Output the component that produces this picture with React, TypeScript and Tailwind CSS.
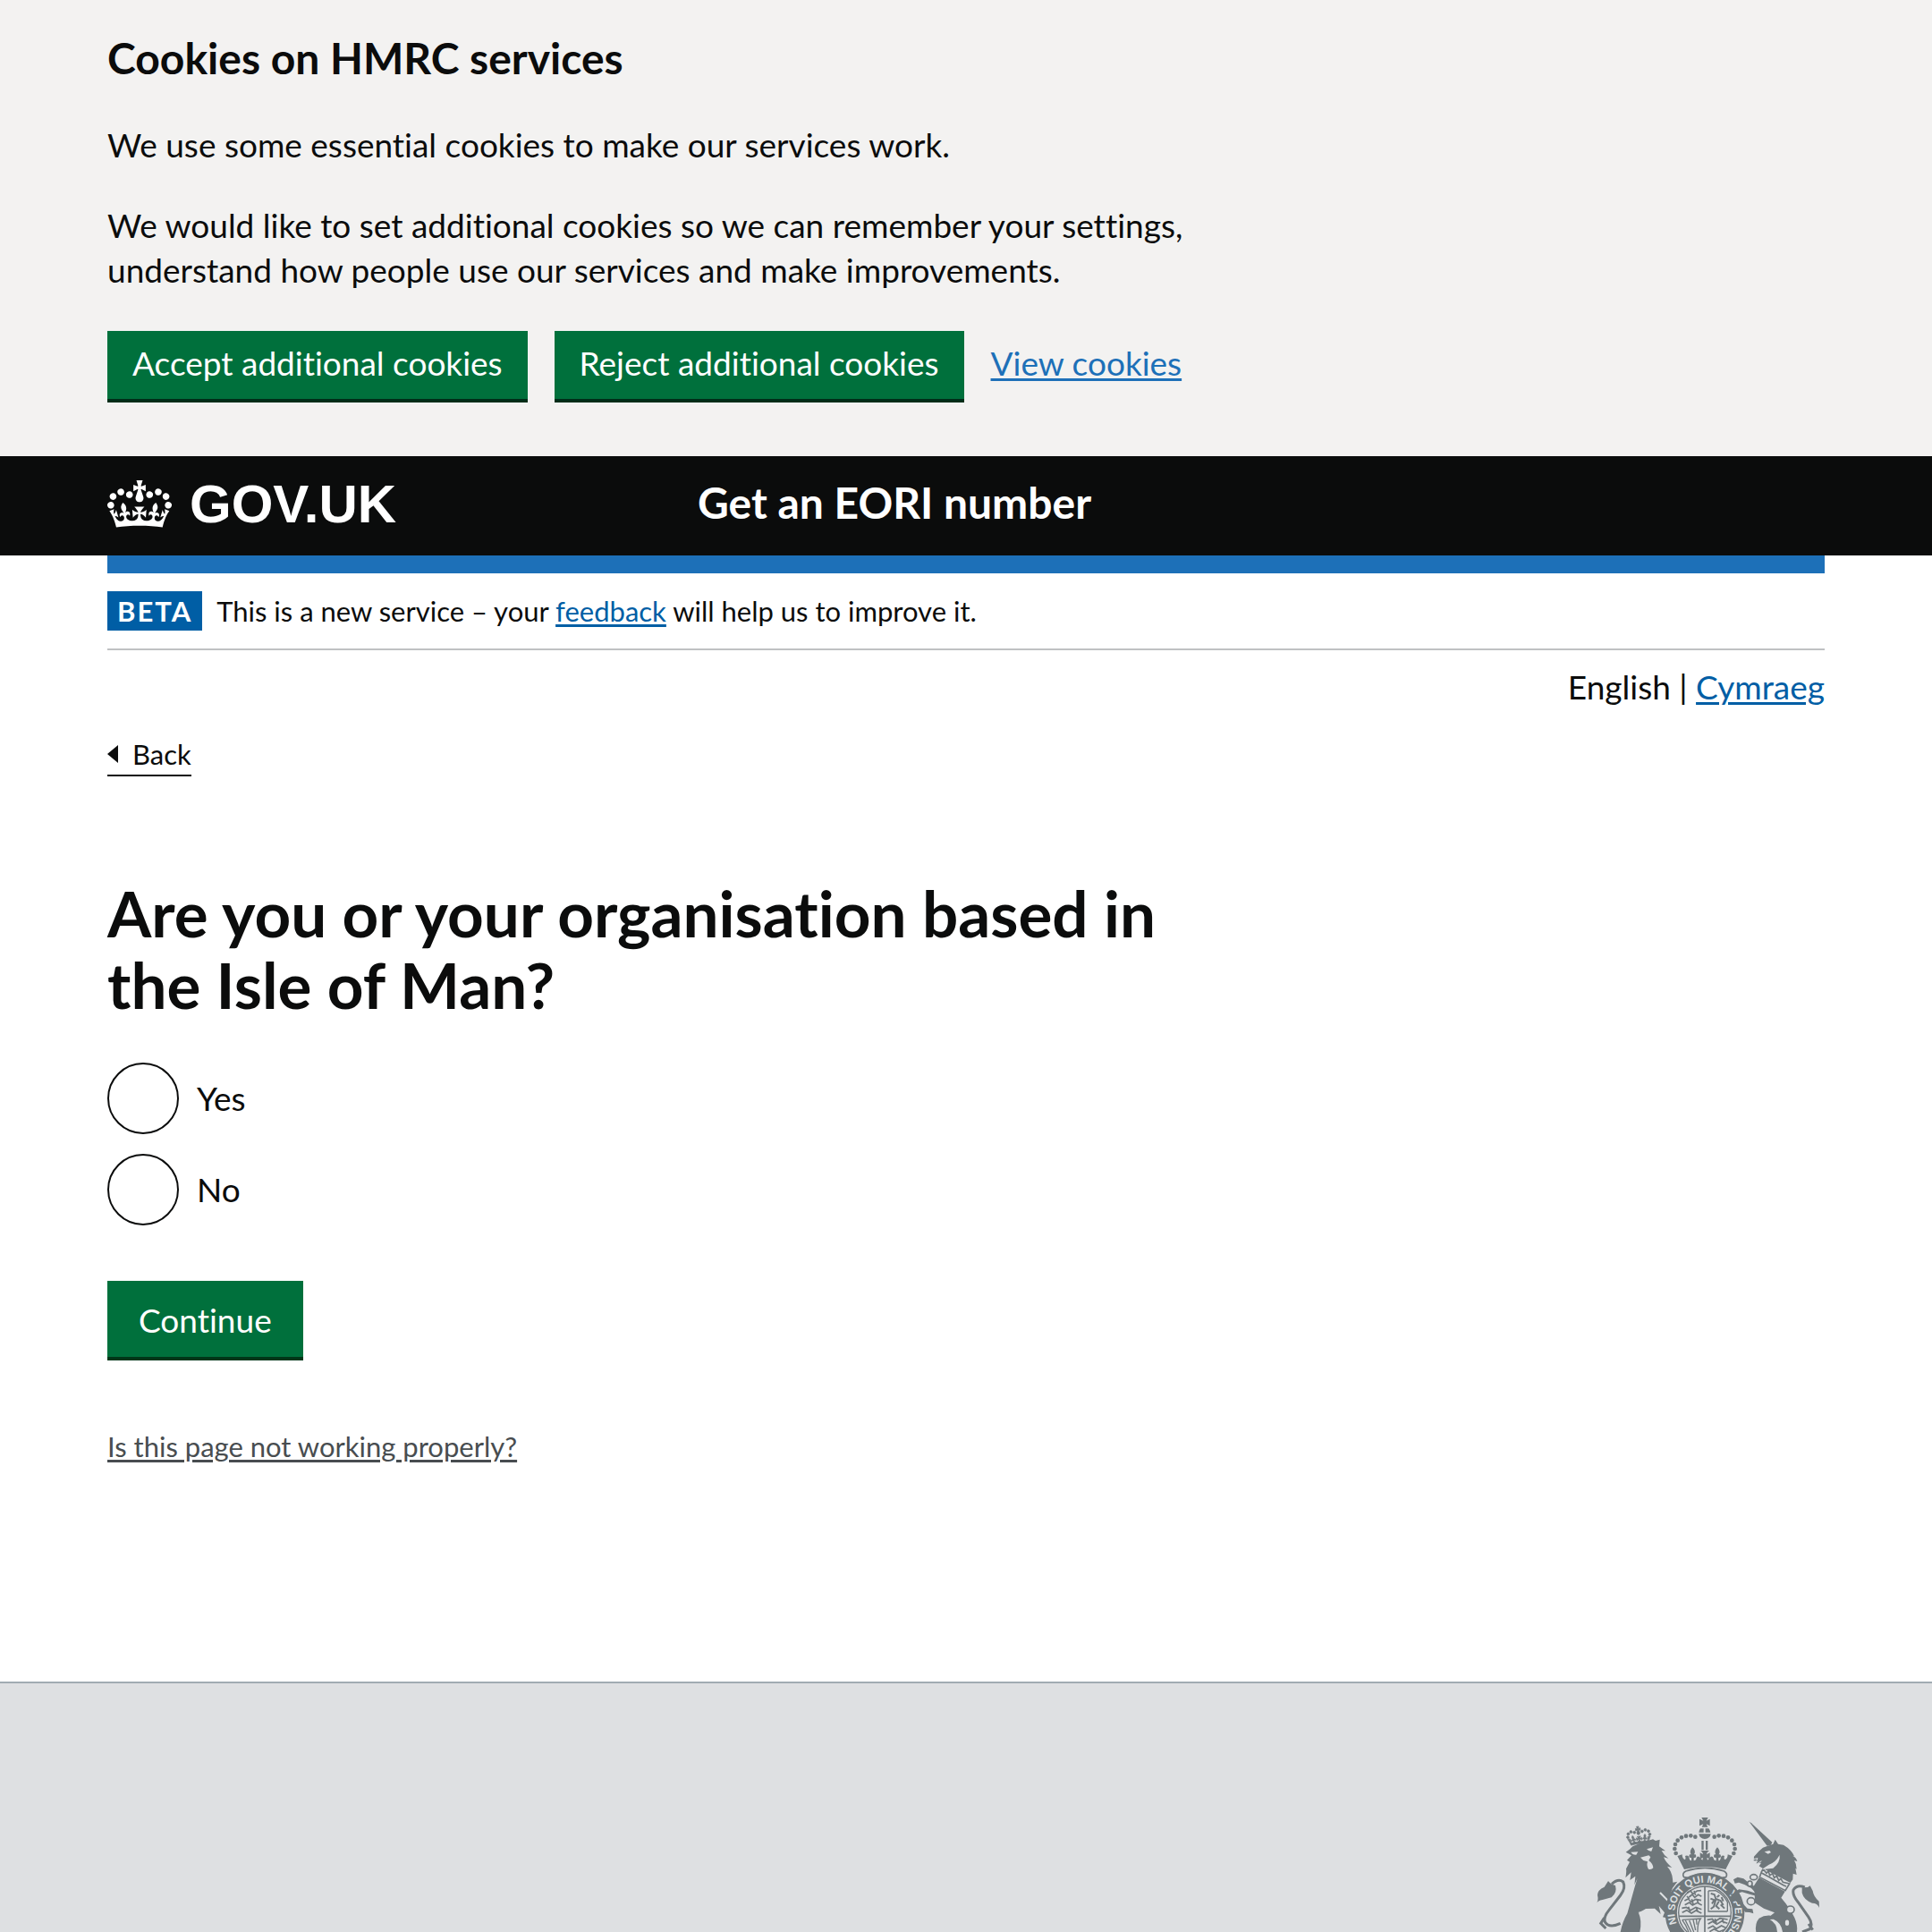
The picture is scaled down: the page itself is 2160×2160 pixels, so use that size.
import type { ReactNode } from "react";

const CROWN_PATH =
  "M25 30.2c3.5 1.5 7.7-.2 9.1-3.7 1.5-3.6-.2-7.8-3.9-9.2-3.6-1.4-7.6.3-9.1 3.9-1.4 3.5.3 7.5 3.9 9zM9 39.5c3.6 1.5 7.8-.2 9.2-3.7 1.5-3.6-.2-7.8-3.9-9.1-3.6-1.5-7.6.2-9.1 3.8-1.4 3.5.3 7.5 3.8 9zM4.4 57.2c3.5 1.5 7.7-.2 9.1-3.8 1.5-3.6-.2-7.7-3.9-9.1-3.5-1.5-7.6.3-9.1 3.8-1.4 3.5.3 7.6 3.9 9.1zm38.3-21.4c3.5 1.5 7.7-.2 9.1-3.8 1.5-3.6-.2-7.7-3.9-9.1-3.6-1.5-7.6.3-9.1 3.8-1.3 3.6.4 7.7 3.9 9.1zm64.4-5.6c-3.6 1.5-7.8-.2-9.1-3.7-1.5-3.6.2-7.8 3.8-9.2 3.6-1.4 7.7.3 9.2 3.9 1.3 3.5-.4 7.5-3.9 9zm15.9 9.3c-3.6 1.5-7.7-.2-9.1-3.7-1.5-3.6.2-7.8 3.7-9.1 3.6-1.5 7.7.2 9.2 3.8 1.5 3.5-.3 7.5-3.8 9zm4.7 17.7c-3.6 1.5-7.8-.2-9.2-3.8-1.5-3.6.2-7.7 3.9-9.1 3.6-1.5 7.7.3 9.2 3.8 1.3 3.5-.4 7.6-3.9 9.1zM89.3 35.8c-3.6 1.5-7.8-.2-9.2-3.8-1.4-3.6.2-7.7 3.9-9.1 3.6-1.5 7.7.3 9.2 3.8 1.4 3.6-.3 7.7-3.9 9.1zM69.7 17.7l8.9 4.7V9.3l-8.9 2.8c-.2-.3-.5-.6-.9-.9L72.4 0H59.6l3.5 11.2c-.3.3-.6.5-.9.9l-8.8-2.8v13.1l8.8-4.7c.3.3.6.7.9.9l-5 15.4v.1c-.2.8-.4 1.6-.4 2.4 0 4.1 3.1 7.5 7 8.1h.2c.3 0 .7.1 1 .1.4 0 .7 0 1-.1h.2c4-.6 7.1-4.1 7.1-8.1 0-.8-.1-1.7-.4-2.4V34l-5.1-15.4c.4-.2.7-.6 1-.9zM66 92.8c16.9 0 32.8 1.1 47.1 3.2 4-16.9 8.9-26.7 14-33.5l-9.6-3.4c1 4.9 1.1 7.2 0 10.2-1.5-1.4-3-4.3-4.2-8.7L108.6 76c2.8-2 5-3.2 7.5-3.3-4.4 9.4-10 11.9-13.6 11.2-4.3-.8-6.3-4.6-5.6-7.9 1-4.7 5.7-5.9 8-.5 4.3-8.7-3-11.4-7.6-8.8 7.1-7.2 7.9-13.5 2.1-21.1-8 6.1-8.1 12.3-4.5 20.8-4.7-5.4-12.1-2.5-9.5 6.2 3.4-5.2 7.9-2 7.2 3.1-.6 4.3-6.4 7.8-13.5 7.2-10.3-.9-10.9-8-11.2-13.8 2.5-.5 7.1 1.8 11 7.3L80.2 60c-4.1 4.4-8 5.3-12.3 5.4 1.4-4.4 8-11.6 8-11.6H55.5s6.4 7.2 7.9 11.6c-4.2-.1-8-1-12.3-5.4l1.4 16.4c3.9-5.5 8.5-7.7 10.9-7.3-.3 5.8-.9 12.8-11.1 13.8-7.2.6-12.9-2.9-13.5-7.2-.7-5 3.8-8.3 7.1-3.1 2.7-8.7-4.6-11.6-9.4-6.2 3.7-8.5 3.6-14.7-4.6-20.8-5.8 7.6-5 13.9 2.2 21.1-4.7-2.6-11.9.1-7.7 8.8 2.3-5.5 7.1-4.2 8.1.5.7 3.3-1.3 7.1-5.7 7.9-3.5.7-9-1.8-13.5-11.2 2.5.1 4.7 1.3 7.5 3.3l-4.7-15.4c-1.2 4.4-2.7 7.2-4.3 8.7-1.1-3-.9-5.3 0-10.2l-9.5 3.4c5 6.9 9.9 16.7 14 33.5 14.8-2.1 30.8-3.2 47.7-3.2z";

const LEFT_BEADS: [number, number][] = [
  [406, 131], [391, 127], [375, 128], [360, 133], [347, 143], [339, 156], [337, 171], [341, 186],
];

function Container({ children }: { children: ReactNode }) {
  return (
    <div className="px-8">
      <div className="mx-auto w-full max-w-[1920px]">{children}</div>
    </div>
  );
}

/* Upper part of the Royal coat of arms. */
function Crest() {
  return (
    <svg className="h-32 w-[250px]" viewBox="72 66 750 384" fill="#6f777b" aria-hidden="true">
      {/* lion's crown */}
      <g transform="translate(171 102) rotate(-8) scale(.63 .62)" stroke="#6f777b" strokeWidth="3">
        <path d={CROWN_PATH} />
      </g>
      {/* lion */}
      <path d="M196 163Q228 148 264 139L273 144L287 140L285 163L306 178L293 177Q300 192 316 203L300 199Q306 216 328 234L312 230Q328 248 330 272L331 284L346 281L330 302L318 335L336 356L344 385L345 405L330 424L325 408L318 416L309 403L297 400L303 385L284 362L290 390L270 371L240 372L216 386Q228 412 220 450H155Q162 415 178 388L205 292L212 270L202 292L205 263L187 276L191 250L172 268Q176 248 174 238L186 215L177 209L192 193L173 182L187 172Z" />
      <path d="M214 384Q248 398 248 450H282Q288 414 262 388Q245 372 214 384Z" fill="#dee0e2" />
      <path d="M190 182L214 181L208 191Q196 192 190 182ZM243 172L264 166L259 179Q250 180 243 172ZM222 200L250 193L256 199L250 210Q265 222 265 235Q258 243 249 239Q242 228 246 214L232 210Z" fill="#dee0e2" />
      <path d="M288 318L330 361" stroke="#dee0e2" strokeWidth="6" />
      {/* lion's tail */}
      <path d="M72 357Q83 345 78 326Q78 309 101 299Q109 287 114 279Q123 291 138 294Q145 318 125 334L95 342Q80 343 72 357Z" />
      <path d="M126 289Q148 269 164 282Q174 302 155 327L117 376Q98 399 103 416Q117 439 155 421M101 402L89 421L106 438" fill="none" stroke="#6f777b" strokeWidth="9" />

      {/* main crown */}
      <path d="M427 66H449L443 77L455 71V94L443 88L448 98H428L433 88L420 94V71L433 77Z" />
      <path d="M423 103H434V116H418Q419 108 423 103ZM440 103H451Q456 109 457 116H440ZM418 121H458Q456 137 438 138Q420 137 418 121ZM427 144H434V175H427ZM441 144H448V175H441Z" />
      {LEFT_BEADS.map(([x, y]) => (
        <g key={`${x}-${y}`}>
          <circle cx={x} cy={y} r="7" />
          <circle cx={876 - x} cy={y} r="7" />
        </g>
      ))}
      <path d="M346 195L362 190Q362 202 370 207Q376 207 372 195Q384 190 386 204Q388 212 393 211L393 201Q381 202 387 190L392 190Q384 179 397 166Q410 179 402 190L407 190Q413 202 401 201L401 211Q409 211 410 202Q414 190 424 203L430 209L432 201L422 205V184L432 190Q432 182 424 177H453Q444 182 444 190L455 184V205L445 201L447 209L453 203Q462 190 467 202Q468 211 476 211L476 201Q464 202 470 190L475 190Q467 179 480 166Q493 179 485 190L490 190Q496 202 484 201L484 211Q489 212 491 204Q493 190 504 195Q500 207 507 207Q515 202 515 190L531 195L508 240Q438 222 369 240Z" />
      <path d="M374 246Q438 224 503 246Q516 254 509 266L492 269Q438 238 384 269L368 266Q360 254 374 246Z" fill="#dee0e2" stroke="#6f777b" strokeWidth="5" />

      {/* garter */}
      <circle cx="438" cy="385" r="112" fill="none" stroke="#6f777b" strokeWidth="42" />
      <path id="garter-motto" d="M438 486A101 101 0 0 1 438 284A101 101 0 0 1 438 486" fill="none" />
      <text className="font-[Liberation_Sans] text-[34px] font-bold" fill="#dee0e2" textAnchor="middle">
        <textPath href="#garter-motto" startOffset="53%">NI SOIT QUI MAL Y PENSE</textPath>
      </text>
      <circle cx="438" cy="385" r="92" fill="#dee0e2" stroke="#dee0e2" strokeWidth="3" />
      <circle cx="438" cy="385" r="88" fill="none" stroke="#6f777b" strokeWidth="4" />
      <path d="M351 397H526M438 297V450" stroke="#6f777b" strokeWidth="5" />
      {/* quarterings */}
      <g fill="none" stroke="#6f777b" strokeWidth="5">
        <path d="M378 318L390 312L398 322L412 312L426 311M385 333L396 324L404 334L416 325L427 331M378 330L386 339M402 312L407 326M370 345L382 339L392 349L408 340L426 344M371 359L386 351L397 360L413 352L428 360M394 340L399 356M411 340L417 354M361 370L376 367L390 377L408 367L427 374M362 385L377 377L393 387L408 378L427 387M383 365L389 382M409 367L415 383" />
        <path d="M450 312V381H514M450 312L474 311Q501 324 514 350V381" strokeWidth="4" />
        <path d="M458 321L470 324L475 339L491 345L500 360M457 338L470 343L462 355M475 341L468 365L458 373M485 347L476 363L487 373M491 358L504 371M487 326L479 333M494 333L500 347" strokeWidth="6" />
        <path d="M362 409L424 405Q413 419 414 450M362 409L374 428L384 450M373 411L392 450M386 411L401 450M399 409L407 444M410 408L411 425" strokeWidth="4" />
        <path d="M446 409L463 406L471 415L489 404L515 408M449 423L464 415L478 424L494 414L514 421M472 405L477 421M496 404L502 421M448 438L465 430L477 439L494 429L511 437M454 449L469 440L486 449L506 441" />
      </g>

      {/* unicorn */}
      <path d="M587 80L594 85L664 149L660 158L647 161Z" />
      <path d="M647 162L667 155L674 140L684 155L702 158Q729 174 738 196L732 194Q746 201 748 213L738 210Q746 222 746 239L742 236L746 258L734 254L733 274L725 285L634 238L620 229L627 218L610 220L616 212L602 211L603 197L619 179L633 167Z" />
      <path d="M689 191Q692 217 667 236L628 241L653 224Q676 216 689 191ZM638 181L655 177L660 183L650 188Z" fill="#dee0e2" />
      <path d="M600 206L615 203L611 211M616 219L628 212" fill="none" stroke="#dee0e2" strokeWidth="3" />
      {/* collar */}
      <path d="M633 237L722 288L712 312L622 262Z" fill="#dee0e2" />
      <path d="M635 241L645 253L651 246L656 260L665 254L671 268L679 262L686 277L693 271L700 283L722 288L708 311L622 266L627 251L651 264L702 293L711 297M633 239L627 251" fill="none" stroke="#6f777b" strokeWidth="5" />
      {/* unicorn's body and forelegs */}
      <path d="M620 268L707 314L694 335Q724 370 739 402Q750 426 747 450H610Q605 421 620 404Q637 393 659 395L672 385L636 371L606 352L605 318L602 296Z" />
      <path d="M608 319L594 303L571 291L552 284L539 287L534 274L548 266L568 271L588 287L610 300ZM610 329L588 323L563 316L548 320L559 348L581 371L598 373L601 388L588 384L573 383L561 363L541 346L524 325L539 318L552 307L582 311L611 321Z" />
      <path d="M668 407Q695 418 699 450H681Q680 421 656 408Z" fill="#dee0e2" />
      <g fill="#dee0e2" stroke="#6f777b" strokeWidth="5">
        <ellipse cx="602" cy="266" rx="12" ry="9" />
        <ellipse cx="589" cy="288" rx="8" ry="9" />
        <ellipse cx="593" cy="347" rx="13" ry="12" />
        <ellipse cx="725" cy="375" rx="13" ry="12" />
        <ellipse cx="714" cy="419" rx="9" ry="12" />
      </g>
      {/* unicorn's tail */}
      <path d="M764 301L783 300L791 295L800 312Q803 332 821 347L822 369Q816 353 798 353Q770 343 764 319Z" />
      <path d="M773 300Q747 289 735 309Q731 326 751 350L786 400Q802 424 790 440L765 450M786 423L800 443" fill="none" stroke="#6f777b" strokeWidth="9" />
    </svg>
  );
}

const LINK = "underline decoration-[3px] underline-offset-[3px]";
const COOKIE_BUTTON =
  "cursor-pointer bg-[#00703c] px-7 pt-[11px] pb-[15px] text-white border-b-4 border-[#002d18]";
const RADIO =
  "size-20 shrink-0 cursor-pointer appearance-none rounded-full border-2 border-[#0b0c0c] bg-white checked:shadow-[inset_0_0_0_18px_white] checked:bg-[#0b0c0c]";

export default function App() {
  return (
    <div className="min-h-screen overflow-x-hidden bg-white font-[Lato,sans-serif] text-[37px] leading-[50px] text-[#0b0c0c] [font-variant-ligatures:none]">
      <section className="bg-[#f3f2f1] pt-[35px] pb-[60px]" aria-label="Cookies on HMRC services">
        <Container>
          <div className="max-w-[1250px]">
            <h2 className="text-[48px] leading-[60px] font-bold">Cookies on HMRC services</h2>
            <p className="mt-[42px]">We use some essential cookies to make our services work.</p>
            <p className="mt-10">
              We would like to set additional cookies so we can remember your settings, understand
              how people use our services and make improvements.
            </p>
          </div>
          <div className="mt-[43px] flex flex-wrap gap-[30px]">
            <button type="button" className={COOKIE_BUTTON}>Accept additional cookies</button>
            <button type="button" className={COOKIE_BUTTON}>Reject additional cookies</button>
            <a href="#cookies" className={`pt-[11px] text-[#1d70b8] ${LINK}`}>View cookies</a>
          </div>
        </Container>
      </section>

      <header className="bg-[#0b0c0c] text-white">
        <Container>
          <div className="flex h-[111px] items-center pb-1">
            <div className="w-1/3">
              <a href="#govuk" className="flex items-center gap-5">
                <svg className="h-[53px] w-[72px]" viewBox="0 0 132 97" fill="currentColor" aria-hidden="true">
                  <path d={CROWN_PATH} />
                </svg>
                <span className="font-[Liberation_Sans] text-[60px] leading-[64px] font-bold">GOV.UK</span>
              </a>
            </div>
            <a href="#service" className="pb-1 pl-5 text-[48px] leading-[60px] font-bold">
              Get an EORI number
            </a>
          </div>
        </Container>
      </header>

      <Container>
        <div className="h-5 bg-[#1d70b8]" />
        <div className="flex items-center gap-4 border-b-2 border-[#bfc1c3] py-5 text-[31px] leading-10">
          <strong className="bg-[#005ea5] px-[11px] leading-[44px] tracking-[2px] text-white">BETA</strong>
          <p>
            This is a new service – your{" "}
            <a href="#feedback" className={`text-[#005ea5] ${LINK}`}>feedback</a> will help us to
            improve it.
          </p>
        </div>

        <nav className="mt-4 text-right" aria-label="Language">
          English |{" "}
          <a href="#cymraeg" className={`text-[#005ea5] ${LINK}`}>Cymraeg</a>
        </nav>

        <a
          href="#back"
          className="mt-[30px] inline-flex items-center gap-4 border-b-2 border-[#0b0c0c] pb-[3px] text-[31px] leading-10"
        >
          <svg className="h-5 w-3" viewBox="0 0 12 20" fill="currentColor" aria-hidden="true">
            <path d="M12 0V20L0 10Z" />
          </svg>
          Back
        </a>

        <main className="pb-[243px]">
          <form onSubmit={(e) => e.preventDefault()}>
            <fieldset>
              <legend className="max-w-[1250px] pt-[113px]">
                <h1 className="text-[71px] leading-[80px] font-bold">
                  Are you or your organisation based in the Isle of Man?
                </h1>
              </legend>
              <div className="mt-[47px] flex flex-col gap-[22px]">
                <label className="flex items-center gap-5">
                  <input type="radio" name="isle-of-man" value="yes" className={RADIO} />
                  Yes
                </label>
                <label className="flex items-center gap-5">
                  <input type="radio" name="isle-of-man" value="no" className={RADIO} />
                  No
                </label>
              </div>
            </fieldset>
            <button
              type="submit"
              className="mt-[62px] block cursor-pointer border-b-4 border-[#003618] bg-[#00703c] px-[35px] pt-[19px] pb-4 text-white"
            >
              Continue
            </button>
          </form>
          <p className="mt-[76px] text-[31px] leading-10">
            <a href="#problem" className={`text-[#484d50] ${LINK}`}>Is this page not working properly?</a>
          </p>
        </main>
      </Container>

      <footer className="border-t-2 border-[#a1acb2] bg-[#dee0e2] pt-[150px]">
        <Container>
          <div className="flex justify-end pr-[6px]">
            <Crest />
          </div>
        </Container>
      </footer>
    </div>
  );
}
